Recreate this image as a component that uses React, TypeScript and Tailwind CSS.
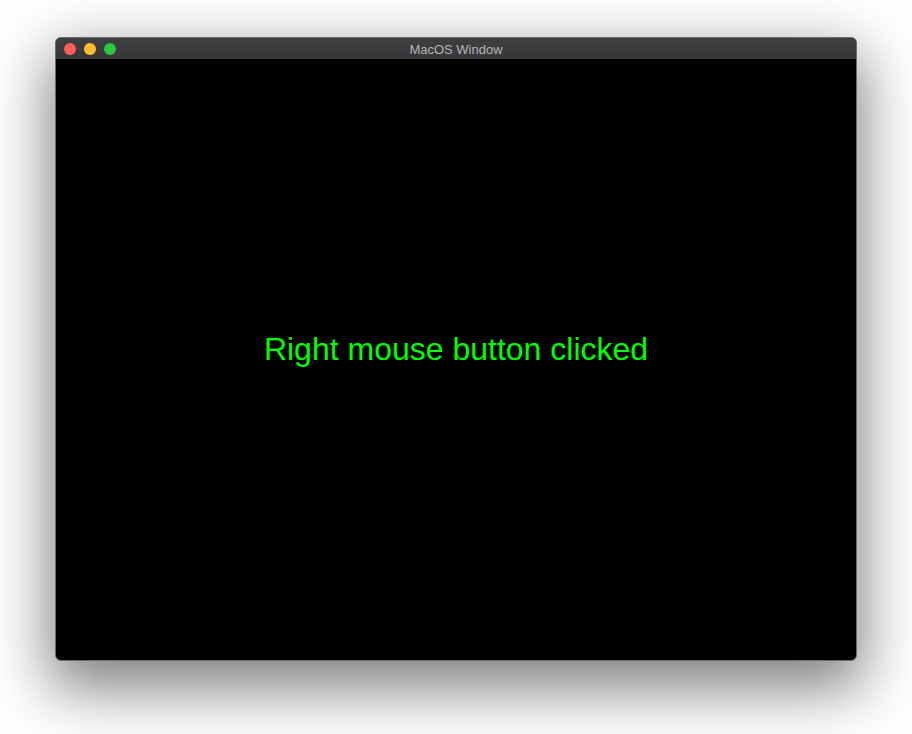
export default function App() {
  return (
    <div className="w-[912px] h-[734px] bg-white pl-[55px] pt-[37px]" style={{ fontFamily: '"Liberation Sans", Arial, sans-serif' }}>
      <div className="w-[802px] rounded-[6px] overflow-hidden border border-[#6b6b6b] shadow-[0_22px_60px_6px_rgba(0,0,0,0.5)] bg-black">
        <div className="relative h-[22px] flex items-center bg-gradient-to-b from-[#3f3f41] to-[#37373a] border-b border-black">
          <div className="flex items-center gap-[8px] pl-[8px] pt-[1px]">
            <span className="w-[12px] h-[12px] rounded-full bg-[#fe5f57]" />
            <span className="w-[12px] h-[12px] rounded-full bg-[#febc2e]" />
            <span className="w-[12px] h-[12px] rounded-full bg-[#28c840]" />
          </div>
          <div className="absolute inset-0 flex items-center justify-center pt-[2px] text-[13px] text-[#b4b4b6]">
            MacOS Window
          </div>
        </div>
        <div className="h-[600px] flex items-center justify-center pb-[22px]">
          <span className="text-[32px] text-[#00ff00]">Right mouse button clicked</span>
        </div>
      </div>
    </div>
  );
}
